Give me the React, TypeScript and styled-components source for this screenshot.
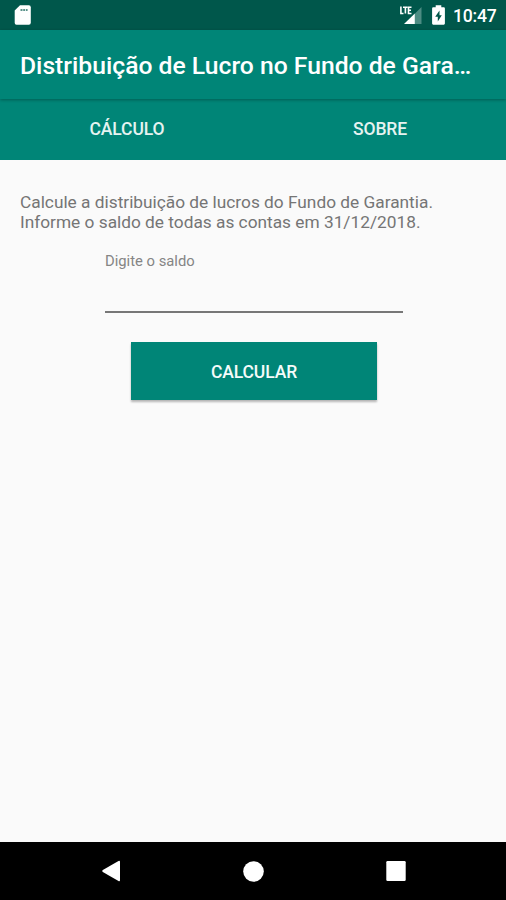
import React from 'react';
import styled, { createGlobalStyle } from 'styled-components';

const GlobalStyle = createGlobalStyle`
  * { box-sizing: border-box; }
  body { margin: 0; background: #fafafa; }
`;

const Screen = styled.div`
  display: flex;
  flex-direction: column;
  width: 506px;
  height: 900px;
  overflow: hidden;
  background: #fafafa;
  font-family: Roboto, 'Liberation Sans', sans-serif;
`;

const StatusBar = styled.div`
  display: flex;
  align-items: center;
  justify-content: space-between;
  height: 30px;
  padding: 0 9px 0 14px;
  background: #00574b;
  color: #fff;
`;

const StatusIcons = styled.div`
  display: flex;
  align-items: center;
`;

const StatusIcon = styled.svg`
  display: block;
  overflow: visible;
`;

const BatteryIcon = styled(StatusIcon)`
  margin: 0 8px 0 10px;
`;

const Clock = styled.span`
  width: 44px;
  padding-top: 2px;
  font-size: 17.6px;
  letter-spacing: -0.2px;
  line-height: 28px;
  font-weight: 500;
  white-space: nowrap;
`;

const AppBar = styled.header`
  height: 69px;
  padding: 0 20px;
  background: #008577;
  box-shadow: 0 1px 3px rgba(0, 0, 0, 0.3);
  z-index: 1;
`;

const Title = styled.h1`
  margin: 0;
  font-size: 24.7px;
  line-height: 71px;
  font-weight: 500;
  color: #fff;
  white-space: nowrap;
`;

const TabBar = styled.nav`
  display: grid;
  grid-template-columns: 1fr 1fr;
  height: 61px;
  background: #008577;
`;

const Tab = styled.button`
  padding: 0 0 1px 1px;
  border: 0;
  background: none;
  color: #e6f3f1;
  font: 500 17.5px/60px Roboto, sans-serif;
  letter-spacing: -0.1px;
  text-align: center;
`;

const Content = styled.main`
  display: flex;
  flex: 1;
  flex-direction: column;
  padding: 32px 20px 0;
`;

const Intro = styled.p`
  margin: 0;
  font-size: 17.3px;
  line-height: 20px;
  color: #757575;
  white-space: nowrap;
`;

const Field = styled.label`
  display: flex;
  flex-direction: column;
  width: 298px;
  margin: 20px 0 0 85px;
`;

const FieldLabel = styled.span`
  font-size: 14.8px;
  line-height: 19px;
  color: #858585;
`;

const FieldInput = styled.input`
  height: 42px;
  padding: 0;
  border: 0;
  border-bottom: 2px solid #777;
  outline: 0;
  background: transparent;
  font: 20px Roboto, sans-serif;
`;

const SubmitButton = styled.button`
  width: 246px;
  height: 58px;
  margin: 29px 0 0 111px;
  padding: 2px 0 0;
  border: 0;
  background: #008577;
  box-shadow: 0 2px 2px rgba(0, 0, 0, 0.28);
  color: #f5fbfa;
  font: 500 17.5px/56px Roboto, sans-serif;
  letter-spacing: -0.1px;
`;

const NavigationBar = styled.footer`
  display: grid;
  grid-template-columns: 20px 20px 20px;
  justify-content: center;
  align-items: center;
  column-gap: 123px;
  height: 58px;
  background: #000;
`;

const NavIcon = styled.svg`
  display: block;
  fill: #fff;
`;

export default function App() {
  return (
    <>
      <GlobalStyle />
      <Screen>
        <StatusBar>
          <StatusIcon width="18" height="20" viewBox="0 0 18 20">
            <path
              fill="#fff"
              d="M6 .3H14.8Q16.8 .3 16.8 2.3V17.7Q16.8 19.7 14.8 19.7H2.5Q.7 19.7 .7 17.7V5.5Z"
            />
            <path fill="#00574b" opacity=".65" d="M6.5 4H8.5V6H6.5ZM9.2 4H11.2V6H9.2ZM12 4H13.6V6H12Z" />
          </StatusIcon>
          <StatusIcons>
            <StatusIcon width="23" height="20" viewBox="0 0 23 20">
              <path fill="#4d8c83" d="M22.5 2V19H15.5V9Z" />
              <path fill="#fff" d="M15.8 8.5V19H5Z" />
              <path fill="none" stroke="#fff" strokeWidth="1.6" d="M1.9 1.5V8.5H4.5M4 2.3H8.5M6.4 2.3V8.5M12.5 2.3H9.5V8.5H12.5M9.5 5.3H12" />
            </StatusIcon>
            <BatteryIcon width="13" height="20" viewBox="0 0 13 20">
              <path fill="#fff" d="M3.7 .3H9.3V2.3H11.8Q12.9 2.3 12.9 3.4V18.6Q12.9 19.7 11.8 19.7H1.2Q.1 19.7 .1 18.6V3.4Q.1 2.3 1.2 2.3H3.7Z" />
              <path fill="#00574b" d="M7.5 5.5L3.2 11.7H5.8V16.5L9.8 10.2H7.5Z" />
            </BatteryIcon>
            <Clock>10:47</Clock>
          </StatusIcons>
        </StatusBar>
        <AppBar>
          <Title>Distribuição de Lucro no Fundo de Gara…</Title>
        </AppBar>
        <TabBar>
          <Tab>CÁLCULO</Tab>
          <Tab>SOBRE</Tab>
        </TabBar>
        <Content>
          <Intro>
            Calcule a distribuição de lucros do Fundo de Garantia.
            <br />
            Informe o saldo de todas as contas em 31/12/2018.
          </Intro>
          <Field>
            <FieldLabel>Digite o saldo</FieldLabel>
            <FieldInput />
          </Field>
          <SubmitButton>CALCULAR</SubmitButton>
        </Content>
        <NavigationBar>
          <NavIcon width="20" height="22" viewBox="0 0 20 22">
            <path d="M18.5 1Q20 .2 20 2V20Q20 21.7 18.5 21L2.8 12Q1.5 11 2.8 10Z" />
          </NavIcon>
          <NavIcon width="21" height="21" viewBox="0 0 21 21">
            <circle cx="10.5" cy="10.5" r="10.3" />
          </NavIcon>
          <NavIcon width="20" height="20" viewBox="0 0 20 20">
            <rect x=".3" width="19.4" height="20" rx="1.2" />
          </NavIcon>
        </NavigationBar>
      </Screen>
    </>
  );
}
